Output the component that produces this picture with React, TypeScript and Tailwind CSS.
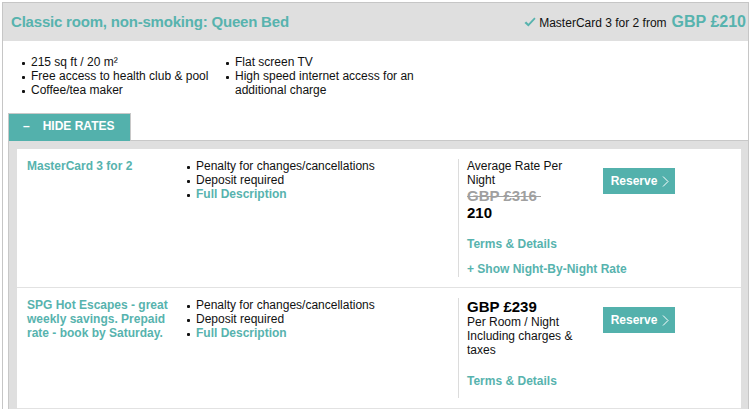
const teal = "text-[#57b3ae]";

function Bullet({ children, className = "" }: { children: React.ReactNode; className?: string }) {
  return (
    <li className={`flex items-start ${className}`}>
      <span className="mt-[7px] mr-[6px] inline-block h-[3px] w-[3px] shrink-0 rounded-[1px] bg-[#111]" />
      <span>{children}</span>
    </li>
  );
}

function ReserveButton() {
  return (
    <button className="flex h-[26px] w-[72px] items-center justify-center gap-[5px] bg-[#53b1ac] text-[12px] font-bold text-white">
      <span className="pl-[2px]">Reserve</span>
      <svg width="7" height="11" viewBox="0 0 7 11" fill="none">
        <path d="M1 0.5 L6 5.5 L1 10.5" stroke="white" strokeWidth="1" />
      </svg>
    </button>
  );
}

function CheckIcon() {
  return (
    <svg width="12" height="11" viewBox="0 0 12 11" className="mr-[3px] self-center">
      <path d="M0.5 6 L2.2 4.4 L4.4 6.7 L10.3 0.5 L11.6 1.8 L4.4 9.6 Z" fill="#57b3ae" />
    </svg>
  );
}

export default function App() {
  return (
    <div className="h-[410px] overflow-hidden bg-white font-['Liberation_Sans',Arial,sans-serif] text-[12px] leading-[14px] text-[#111]">
      <div className="ml-[2px] mt-[2px] w-[747px] border border-b-0 border-[#c6c6c6]">
        <header className="flex h-[38px] items-center justify-between bg-[#dfdfdf] pl-[8px] pr-[2px]">
          <h1 className={`text-[15px] font-bold tracking-[-0.2px] ${teal}`}>Classic room, non-smoking: Queen Bed</h1>
          <div className="flex items-baseline">
            <CheckIcon />
            <span className="mr-[5px]">MasterCard 3 for 2 from</span>
            <span className={`text-[16px] font-bold ${teal}`}>GBP £210</span>
          </div>
        </header>

        <div className="flex pl-[19px] pt-[14px]">
          <ul className="w-[204px]">
            <Bullet>215 sq ft / 20 m²</Bullet>
            <Bullet>Free access to health club &amp; pool</Bullet>
            <Bullet>Coffee/tea maker</Bullet>
          </ul>
          <ul className="w-[200px]">
            <Bullet>Flat screen TV</Bullet>
            <Bullet>High speed internet access for an additional charge</Bullet>
          </ul>
        </div>

        <div className="ml-[5px] mt-[16px]">
          <div className="relative z-10 -mb-px flex h-[28px] w-[123px] border border-b-0 border-[#c8c8c8] bg-[#53b1ac] pl-[14px] pt-[5px] text-[12px] font-bold text-white">
            <span>–</span>
            <span className="ml-[13px]">HIDE RATES</span>
          </div>
          <div className="border-l border-t border-[#c8c8c8] bg-[#dfdfdf] pl-[8px] pr-[7px] pt-[8px]">
            <div className="bg-white">
              <div className="flex border-b border-[#e2e2e2] py-[10px] pl-[10px]">
                <div className={`w-[160px] pr-[10px] font-bold ${teal}`}>MasterCard 3 for 2</div>
                <ul className="w-[271px]">
                  <Bullet>Penalty for changes/cancellations</Bullet>
                  <Bullet>Deposit required</Bullet>
                  <Bullet className={`font-bold ${teal}`}>Full Description</Bullet>
                </ul>
                <div className="w-[129px] border-l border-[#dcdcdc] pl-[8px] pb-px">
                  <p>Average Rate Per Night</p>
                  <p className="text-[15px] font-bold leading-[17px] text-[#a0a0a0] line-through">GBP £316&nbsp;</p>
                  <p className="text-[15px] font-bold leading-[17px] text-black">210</p>
                  <p className={`mt-[16px] font-bold ${teal}`}>Terms &amp; Details</p>
                  <p className={`mt-[11px] whitespace-nowrap font-bold ${teal}`}>+ Show Night-By-Night Rate</p>
                </div>
                <div className="ml-[16px] pt-[9px]">
                  <ReserveButton />
                </div>
              </div>

              <div className="flex border-b border-[#e2e2e2] py-[10px] pl-[10px]">
                <div className={`w-[160px] pr-[10px] font-bold ${teal}`}>
                  SPG Hot Escapes - great weekly savings. Prepaid rate - book by Saturday.
                </div>
                <ul className="w-[271px]">
                  <Bullet>Penalty for changes/cancellations</Bullet>
                  <Bullet>Deposit required</Bullet>
                  <Bullet className={`font-bold ${teal}`}>Full Description</Bullet>
                </ul>
                <div className="w-[129px] border-l border-[#dcdcdc] pl-[8px] pb-[10px]">
                  <p className="text-[15px] font-bold leading-[17px] text-black">GBP £239</p>
                  <p>Per Room / Night Including charges &amp; taxes</p>
                  <p className={`mt-[17px] font-bold ${teal}`}>Terms &amp; Details</p>
                </div>
                <div className="ml-[16px] pt-[9px]">
                  <ReserveButton />
                </div>
              </div>
            </div>
          </div>
        </div>
      </div>
    </div>
  );
}
